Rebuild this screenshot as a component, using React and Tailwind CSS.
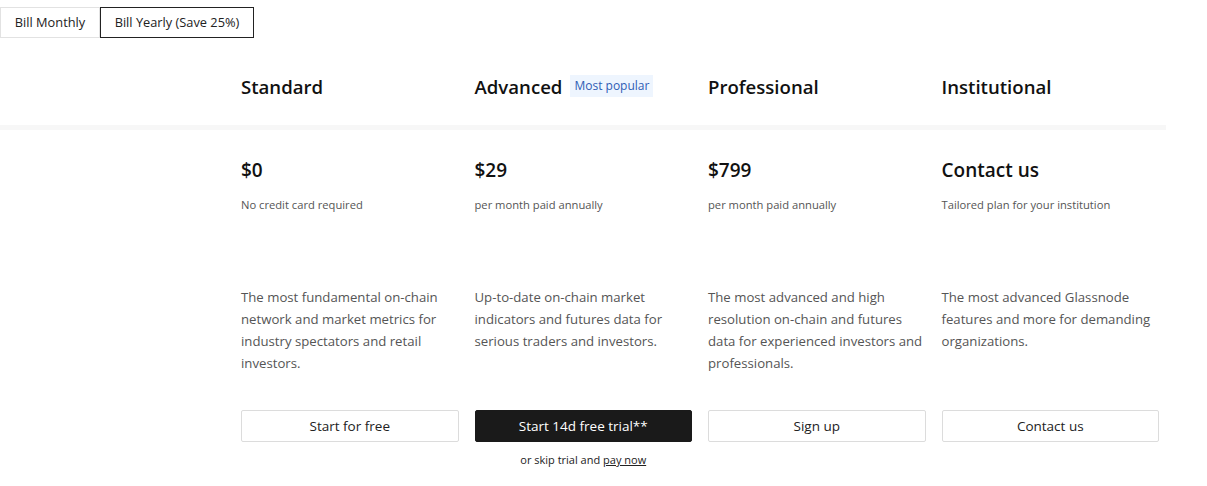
import React, { useState } from "react";

const plans = [
  {
    name: "Standard",
    price: "$0",
    note: "No credit card required",
    desc: "The most fundamental on-chain network and market metrics for industry spectators and retail investors.",
    cta: "Start for free",
  },
  {
    name: "Advanced",
    badge: "Most popular",
    price: "$29",
    note: "per month paid annually",
    desc: "Up-to-date on-chain market indicators and futures data for serious traders and investors.",
    cta: "Start 14d free trial**",
    primary: true,
  },
  {
    name: "Professional",
    price: "$799",
    note: "per month paid annually",
    desc: "The most advanced and high resolution on-chain and futures data for experienced investors and professionals.",
    cta: "Sign up",
  },
  {
    name: "Institutional",
    price: "Contact us",
    note: "Tailored plan for your institution",
    desc: "The most advanced Glassnode features and more for demanding organizations.",
    cta: "Contact us",
  },
];

export default function App() {
  const [yearly, setYearly] = useState(true);

  return (
    <div className="min-h-screen bg-white text-[#111] font-['Open_Sans',sans-serif]">
      {/* billing toggle */}
      <div className="flex pt-[7px]">
        <button
          onClick={() => setYearly(false)}
          className={`h-[31px] w-[100px] text-[12.8px] text-[#222] border ${!yearly ? "border-[#222]" : "border-[#e2e2e2]"}`}
        >
          Bill Monthly
        </button>
        <button
          onClick={() => setYearly(true)}
          className={`h-[31px] w-[154px] text-[12.8px] text-[#222] border ${yearly ? "border-[#222]" : "border-[#e2e2e2]"}`}
        >
          Bill Yearly (Save 25%)
        </button>
      </div>

      {/* plan names */}
      <div className="w-[1166px] border-b-[5px] border-[#f7f7f7]">
        <div className="grid grid-cols-4 gap-4 w-[918px] ml-[241px] h-[87px] items-center pt-[10px]">
          {plans.map((p) => (
            <div key={p.name} className="flex items-center gap-[8px]">
              <h2 className="text-[18.6px] font-semibold">{p.name}</h2>
              {p.badge && (
                <span className="bg-[#eef5fe] text-[#2f5db5] text-[12px] font-medium px-[4px] py-[2px]">
                  {p.badge}
                </span>
              )}
            </div>
          ))}
        </div>
      </div>

      {/* plan details */}
      <div className="grid grid-cols-4 gap-4 w-[918px] ml-[241px] pt-[25px]">
        {plans.map((p) => (
          <div key={p.name} className="flex flex-col">
            <div className="text-[19px] font-semibold leading-[30px]">{p.price}</div>
            <div className="text-[11.2px] text-[#555] mt-[12px] h-[89px]">{p.note}</div>
            <p className="text-[13.2px] leading-[22px] text-[#555] h-[124px]">{p.desc}</p>
            <button
              className={`h-[32px] text-[13.5px] rounded-[2px] border ${
                p.primary
                  ? "bg-[#1a1a1a] border-[#1a1a1a] text-white"
                  : "bg-white border-[#dcdcdc] text-[#222]"
              }`}
            >
              {p.cta}
            </button>
            {p.primary && (
              <div className="text-[11px] text-[#222] text-center mt-[10px]">
                or skip trial and <a className="underline cursor-pointer">pay now</a>
              </div>
            )}
          </div>
        ))}
      </div>
    </div>
  );
}
